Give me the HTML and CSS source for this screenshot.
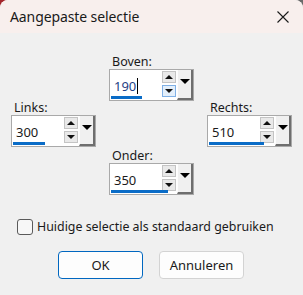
FILE: index.html
```html
<!DOCTYPE html>
<html lang="nl">
<head>
  <meta charset="UTF-8" />
  <meta name="viewport" content="width=device-width, initial-scale=1" />
  <title>Aangepaste selectie</title>
  <link rel="stylesheet" href="styles.css">
</head>
<body>
  <div class="dialog">
    <div class="titlebar">
      <span class="title">Aangepaste selectie</span>
      <svg class="close" width="12" height="12" viewBox="0 0 12 12">
        <path d="M0.5 0.5 L11.5 11.5 M11.5 0.5 L0.5 11.5" stroke="#1a1a1a" stroke-width="1.1" fill="none"/>
      </svg>
    </div>

    <div class="content">
      <div class="fields">
        <div class="field top">
          <label>Boven:</label>
          <div class="spin">
            <div class="box">
              <span class="value focus">190<i class="caret"></i></span>
              <div class="arrows">
                <span class="arrow up"></span>
                <span class="arrow down hot"></span>
              </div>
              <div class="bar" style="width: 31px"></div>
            </div>
            <div class="drop"></div>
          </div>
        </div>

        <div class="field left">
          <label>Links:</label>
          <div class="spin">
            <div class="box">
              <span class="value">300</span>
              <div class="arrows">
                <span class="arrow up"></span>
                <span class="arrow down"></span>
              </div>
              <div class="bar" style="width: 32px"></div>
            </div>
            <div class="drop"></div>
          </div>
        </div>

        <div class="field right">
          <label>Rechts:</label>
          <div class="spin">
            <div class="box">
              <span class="value">510</span>
              <div class="arrows">
                <span class="arrow up"></span>
                <span class="arrow down"></span>
              </div>
              <div class="bar" style="width: 55px"></div>
            </div>
            <div class="drop"></div>
          </div>
        </div>

        <div class="field bottom">
          <label>Onder:</label>
          <div class="spin">
            <div class="box">
              <span class="value">350</span>
              <div class="arrows">
                <span class="arrow up"></span>
                <span class="arrow down"></span>
              </div>
              <div class="bar" style="width: 57px"></div>
            </div>
            <div class="drop"></div>
          </div>
        </div>
      </div>

      <label class="check">
        <span class="checkbox"></span>
        Huidige selectie als standaard gebruiken
      </label>

      <div class="buttons">
        <button class="btn primary">OK</button>
        <button class="btn">Annuleren</button>
      </div>
    </div>
  </div>
</body>
</html>
```

FILE: styles.css
```css
html, body {
  margin: 0;
  padding: 0;
}
body {
  width: 303px;
  height: 295px;
  overflow: hidden;
  background: linear-gradient(to right, #a4262c 0%, #a4262c 78%, #6a6a6a 82%, #6a6a6a 100%);
  font-family: 'Noto Sans', sans-serif;
  color: #1a1a1a;
}
.dialog {
  height: 295px;
  background: #f0f0f0;
  border-radius: 8px 8px 0 0;
  display: flex;
  flex-direction: column;
}
.titlebar {
  height: 33px;
  background: #f8efed;
  border-radius: 8px 8px 0 0;
  display: flex;
  align-items: center;
  justify-content: space-between;
  padding: 0 14px 0 10px;
}
.title {
  font-size: 14px;
  letter-spacing: -0.1px;
}
.content {
  padding: 0 0 0 11px;
}
.fields {
  display: grid;
  grid-template-columns: 85px 85px 85px;
  column-gap: 13px;
  row-gap: 0;
  margin-top: 22px;
}
.field label {
  display: block;
  font-size: 12.5px;
  line-height: 14px;
  padding-left: 3px;
}
.field.top { grid-column: 2; grid-row: 1; }
.field.left { grid-column: 1; grid-row: 2; }
.field.right { grid-column: 3; grid-row: 2; }
.field.bottom { grid-column: 2; grid-row: 3; margin-top: 2px; }

.spin {
  display: flex;
  height: 32px;
  border: 1px solid #a9a9a9;
  background: #fff;
  box-sizing: border-box;
}
.box {
  flex: 1;
  position: relative;
  display: flex;
  align-items: center;
  padding-left: 4px;
}
.value {
  flex: 1;
  font-size: 13px;
  margin-top: 1px;
  display: flex;
  align-items: center;
}
.value.focus {
  color: #1f3f86;
}
.caret {
  display: inline-block;
  width: 1px;
  height: 16px;
  background: #000;
  margin-left: 1px;
}
.arrows {
  display: flex;
  flex-direction: column;
  gap: 2px;
  margin-right: 1px;
  margin-top: -3px;
}
.arrow {
  width: 12px;
  height: 10px;
  background: #e9e9e9;
  border: 1px solid #c4c4c4;
  display: flex;
  align-items: center;
  justify-content: center;
}
.arrow::after {
  content: "";
  border-left: 4px solid transparent;
  border-right: 4px solid transparent;
}
.arrow.up::after {
  border-bottom: 4px solid #111;
}
.arrow.down::after {
  border-top: 4px solid #111;
}
.arrow.hot {
  background: #e3effb;
  border-color: #7fb0e6;
}
.bar {
  position: absolute;
  left: 1px;
  bottom: 1px;
  height: 3px;
  background: #0a6cc7;
}
.drop {
  width: 13px;
  background: #f0f0f0;
  border-left: 1px solid #fdfdfd;
  border-right: 2px solid #6e6e6e;
  border-bottom: 2px solid #6e6e6e;
  display: flex;
  align-items: flex-start;
  justify-content: center;
  padding-top: 9px;
}
.drop::after {
  content: "";
  border-left: 5px solid transparent;
  border-right: 5px solid transparent;
  border-top: 5px solid #000;
}

.check {
  display: flex;
  align-items: center;
  gap: 4px;
  margin: 23px 0 0 6px;
  font-size: 12.4px;
}
.checkbox {
  width: 14px;
  height: 14px;
  border: 1px solid #5a5a5a;
  border-radius: 3px;
  background: #f7f7f7;
}

.buttons {
  display: flex;
  gap: 16px;
  margin: 16px 0 0 47px;
}
.btn {
  width: 85px;
  height: 28px;
  font-family: 'Noto Sans', sans-serif;
  font-size: 13px;
  color: #1a1a1a;
  background: #fdfdfd;
  border: 1px solid #d3d3d3;
  border-radius: 4px;
  padding: 0;
}
.btn.primary {
  border-color: #0067c0;
}
```
